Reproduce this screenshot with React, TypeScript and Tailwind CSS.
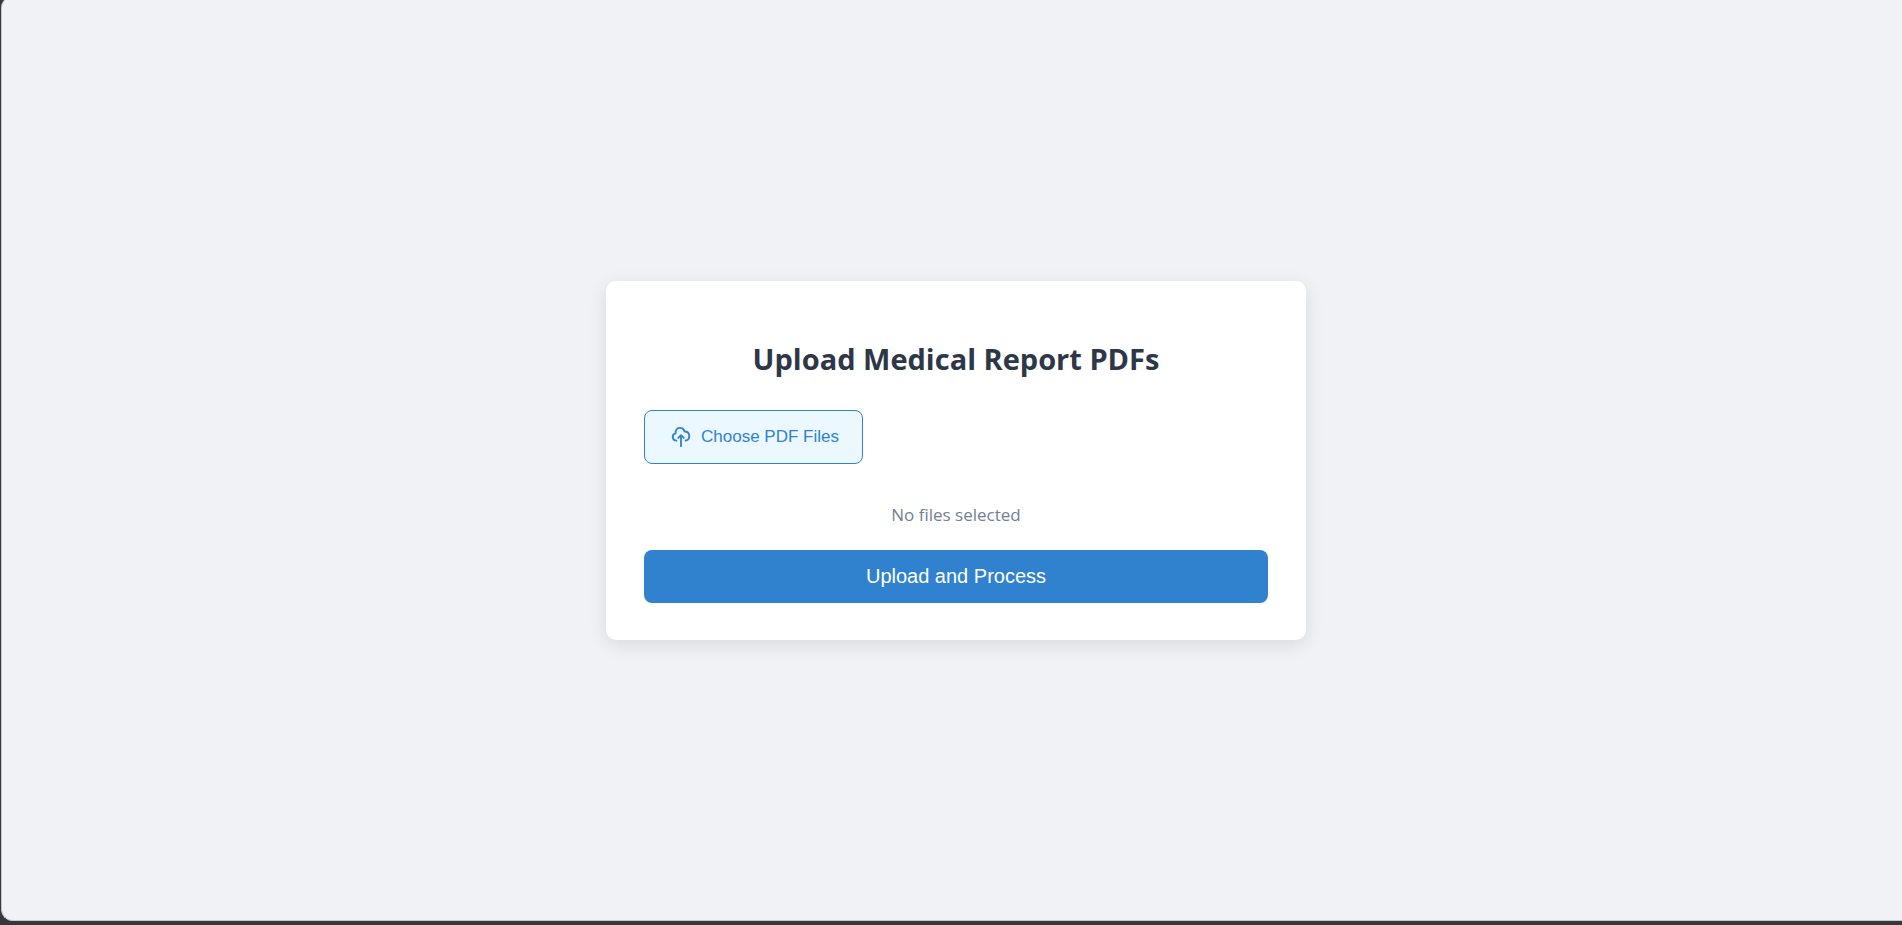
import { useRef, useState } from "react";

function CloudUploadIcon() {
  return (
    <svg
      className="size-[22px] shrink-0"
      viewBox="0 0 24 24"
      fill="none"
      stroke="currentColor"
      strokeWidth={2}
      strokeLinecap="round"
      strokeLinejoin="round"
      aria-hidden="true"
    >
      <path d="M7 16a4 4 0 01-.88-7.903A5 5 0 1115.9 6L16 6a5 5 0 011 9.9M15 13l-3-3m0 0l-3 3m3-3v12" />
    </svg>
  );
}

export default function App() {
  const picker = useRef<HTMLInputElement>(null);
  const [names, setNames] = useState<string[]>([]);

  return (
    <div className="flex h-screen flex-col overflow-hidden bg-[#38373a] pb-1 pl-px">
      <main className="-mt-1 flex flex-1 items-center justify-center rounded-l-xl border-b border-l border-[#c6c8cc] bg-[#f0f2f6] pt-1 pl-2">
        <section className="w-full max-w-[700px] rounded-[10px] bg-white px-[38px] pt-[58px] pb-[37px] shadow-[0_5px_19px_rgba(0,0,0,0.1)]">
          <h1 className="mb-[31px] text-center font-['Open_Sans','Noto_Sans',sans-serif] text-[29px] leading-10 font-bold text-[#2d3748]">
            Upload Medical Report PDFs
          </h1>
          <input
            ref={picker}
            type="file"
            accept="application/pdf"
            multiple
            hidden
            aria-label="Choose PDF Files"
            onChange={(e) => setNames(Array.from(e.target.files ?? []).map((f) => f.name))}
          />
          <button
            type="button"
            onClick={() => picker.current?.click()}
            className="flex h-[54px] items-center gap-[9px] rounded-lg border border-[#3182ce] bg-[#ebf8ff] pr-[23px] pl-[25px] font-['Liberation_Sans',Arial,sans-serif] text-[17px] text-[#3182ce]"
          >
            <CloudUploadIcon />
            Choose PDF Files
          </button>
          <p className="mt-[39px] mb-[23px] text-center font-['Open_Sans','Noto_Sans',sans-serif] text-[17px] leading-6 text-[#718096]">
            {names.length ? names.join(", ") : "No files selected"}
          </p>
          <button
            type="button"
            className="h-[53px] w-full rounded-lg bg-[#3182ce] font-['Liberation_Sans',Arial,sans-serif] text-[20px] text-white"
          >
            Upload and Process
          </button>
        </section>
      </main>
    </div>
  );
}
